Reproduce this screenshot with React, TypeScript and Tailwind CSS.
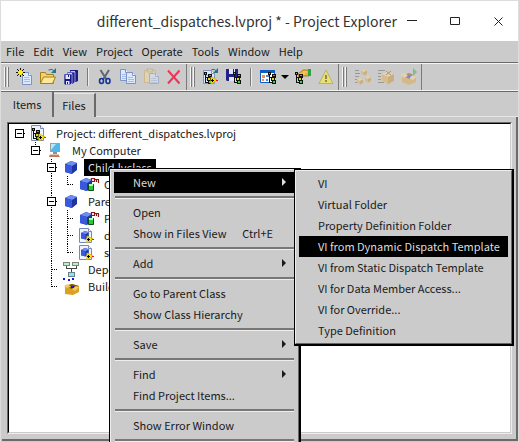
import type { ReactNode } from "react";

/* ---------- shared drawing parts ---------- */

function Icon({ children, faded }: { children: ReactNode; faded?: boolean }) {
  return (
    <svg
      viewBox="0 0 18 18"
      className={faded ? "h-[18px] w-[18px] opacity-50" : "h-[18px] w-[18px]"}
      aria-hidden="true"
    >
      {children}
    </svg>
  );
}

function Sheet({ x, y, w = 9, h = 12 }: { x: number; y: number; w?: number; h?: number }) {
  return (
    <g>
      <path
        d={`M${x + 0.5} ${y + 0.5}h${w - 3}l3 3v${h - 3}h${-w}z`}
        fill="#dce8fb"
        stroke="#7d93c4"
      />
      <path d={`M${x + w - 2.5} ${y + 0.5}v3h3`} fill="#ffffff" stroke="#7d93c4" />
      <path d={`M${x + 2} ${y + 5.5}h${w - 4}M${x + 2} ${y + 7.5}h${w - 3}M${x + 2} ${y + 9.5}h${w - 3}`} stroke="#a4bdec" />
    </g>
  );
}

function Branch({ x, y }: { x: number; y: number }) {
  return (
    <g shapeRendering="crispEdges">
      <path d={`M${x} ${y}h3v3h-3zM${x + 1} ${y + 3}h1v8h-1zM${x + 2} ${y + 5}h3v1h-3zM${x + 2} ${y + 10}h2v1h-2z`} fill="#111" />
      <path d={`M${x + 4} ${y + 2}h4v4h-4zM${x + 3} ${y + 5}h4v4h-4zM${x + 4} ${y + 8}h4v4h-4z`} fill="#111" />
      <path d={`M${x + 1} ${y + 1}h1v1h-1z`} fill="#25d6e6" />
      <path d={`M${x + 5} ${y + 3}h2v1h-2z`} fill="#888" />
      <path d={`M${x + 4} ${y + 6}h2v2h-2z`} fill="#e6d71c" />
      <path d={`M${x + 5} ${y + 9}h2v2h-2z`} fill="#2ce234" />
    </g>
  );
}

function Cube({ x = 0, y = 0 }: { x?: number; y?: number }) {
  return (
    <g>
      <path d={`M${x} ${y + 3}l6-3 6 2v7l-5 4-7-2z`} fill="#1d35a4" />
      <path d={`M${x} ${y + 3}l6-3 6 2-5 3z`} fill="#6d8df0" />
      <path d={`M${x} ${y + 3}l7 2v8l-7-2z`} fill="#3a58dc" />
    </g>
  );
}

function YellowNode({ x, y }: { x: number; y: number }) {
  return (
    <g>
      <path d={`M${x} ${y}l6 3-6 4z`} fill="#ffef0a" stroke="#d8b800" strokeWidth="1" />
      <path d={`M${x} ${y + 3.5}h3M${x + 1.5} ${y + 2}v3`} stroke="#000" />
      <path d={`M${x + 5} ${y + 3}h2v1h-2z`} fill="#f01010" />
    </g>
  );
}

function Box({ x, y, s }: { x: number; y: number; s: number }) {
  return (
    <g>
      <path d={`M${x} ${y + s * 0.25}l${s * 0.5} ${-s * 0.25}l${s * 0.5} ${s * 0.25}v${s * 0.55}l${-s * 0.5} ${s * 0.3}l${-s * 0.5} ${-s * 0.3}z`} fill="#e8ac50" />
      <path d={`M${x} ${y + s * 0.25}l${s * 0.5} ${-s * 0.25}l${s * 0.5} ${s * 0.25}l${-s * 0.5} ${s * 0.25}z`} fill="#f9dc9c" />
      <path d={`M${x + s * 0.5} ${y + s * 0.5}l${s * 0.5} ${-s * 0.25}v${s * 0.55}l${-s * 0.5} ${s * 0.3}z`} fill="#c89238" />
    </g>
  );
}

/* ---------- toolbar ---------- */

const newIcon = (
  <Icon>
    <Sheet x={6} y={4} />
    <g shapeRendering="crispEdges">
      <path d="M4 0h1v9h-1zM0 4h9v1h-9z" fill="#111" />
      <path d="M1 1h1v1h-1zM2 2h1v1h-1zM7 1h1v1h-1zM6 2h1v1h-1zM1 7h1v1h-1zM2 6h1v1h-1zM6 6h1v1h-1zM7 7h1v1h-1z" fill="#111" />
      <path d="M3 3h3v3h-3zM4 2h1v5h-1zM2 4h5v1h-5z" fill="#ffef20" />
    </g>
  </Icon>
);

const openIcon = (
  <Icon>
    <path d="M1.5 15.5v-11h5l1 2h7v9z" fill="#f6d364" stroke="#a8801a" />
    <path d="M1.5 15.5l3-6.500h12l-3 6.500z" fill="#fce898" stroke="#a8801a" />
    <path d="M9.500 2q4-2 6 1.500" fill="none" stroke="#25758b" />
    <path d="M17 0v5h-5z" fill="#25758b" />
  </Icon>
);

const saveAllIcon = (
  <Icon>
    <path d="M8 2h8v11l-2 1h-6z" fill="#1a1a8a" />
    <path d="M9 3h4v3h-4z" fill="#c5c9ea" />
    <path d="M5 4h8v10l-2 2h-6z" fill="#25259a" stroke="#c4c8ea" strokeWidth=".7" />
    <path d="M6 5h4v3h-4z" fill="#d7daf2" />
    <path d="M2 6h8v9l-2 2h-5l-1-1z" fill="#17178a" stroke="#c4c8ea" strokeWidth=".7" />
    <path d="M3.500 7h4.500v4h-4.500zM4 13h3.500v3.500h-3.500z" fill="#e6e8f6" />
    <path d="M6 7h1v2h-1zM5 14h1v2h-1z" fill="#17178a" />
  </Icon>
);

const cutIcon = (
  <Icon>
    <path d="M4.500 2l6 9.500M13 2l-6 9.500" stroke="#5d6671" strokeWidth="2" />
    <ellipse cx="5.500" cy="13" rx="2" ry="2.500" fill="none" stroke="#12349c" strokeWidth="1.600" />
    <ellipse cx="12" cy="13" rx="2" ry="2.500" fill="none" stroke="#12349c" strokeWidth="1.600" />
  </Icon>
);

const copyIcon = (
  <Icon>
    <Sheet x={1} y={1} w={8} h={11} />
    <Sheet x={7} y={4} w={9} h={11} />
  </Icon>
);

const pasteIcon = (
  <Icon faded>
    <path d="M2.500 2.500h11v12h-11z" fill="#f3dc98" stroke="#c8a860" />
    <path d="M5 1h6v3h-6z" fill="#e0d0a0" stroke="#a89560" strokeWidth=".7" />
    <Sheet x={7} y={5} w={9} h={10} />
  </Icon>
);

const deleteIcon = (
  <Icon>
    <path d="M3 2.500l11.500 13M14.500 2.500l-11.500 13" stroke="#ee3457" strokeWidth="2" />
  </Icon>
);

const projectIcon = (
  <Icon>
    <Sheet x={1} y={2} w={11} h={13} />
    <path d="M9.500 1.500q3-1 5 1.500" fill="none" stroke="#25758b" />
    <path d="M16 0v5h-5z" fill="#25758b" />
    <Branch x={2} y={4} />
    <YellowNode x={9} y={9} />
  </Icon>
);

const saveProjectIcon = (
  <Icon>
    <path d="M1 1h12v12h-11l-1-1z" fill="#22228a" />
    <path d="M4 1h6v5h-6zM4 9h7v4h-7z" fill="#e2e4f4" />
    <path d="M8 1h1v4h-1z" fill="#22228a" />
    <Branch x={8} y={4} />
  </Icon>
);

const windowIcon = (
  <Icon>
    <path d="M1.500 2.500h14v12h-14z" fill="#ffffff" stroke="#0d5cc4" />
    <path d="M1 2h15v3h-15z" fill="#0d5cc4" />
    <path d="M3 7h3v3h-3zM3 11h2v2h-2z" fill="#f09058" />
    <path d="M7 7h3v2h-3zM7 11h2v2h-2z" fill="#4d8be0" />
    <Branch x={9} y={4} />
  </Icon>
);

const handIcon = (
  <Icon>
    <path d="M4 6l5-4h6v6h-5l-5 1z" fill="#efad31" stroke="#9c6510" strokeWidth=".7" />
    <path d="M5 6h6M9 4h4" stroke="#fbd978" />
    <path d="M14 1h3v7h-3z" fill="#2ca446" />
    <Branch x={1} y={4} />
  </Icon>
);

const warnIcon = (
  <Icon>
    <path d="M9 2l7 13.500h-14z" fill="#eae070" stroke="#b5b080" strokeLinejoin="round" />
    <path d="M8 7h2v4h-2zM8 12h2v2h-2z" fill="#8e8a50" />
  </Icon>
);

const boxesIcon = (
  <Icon faded>
    <path d="M1 2.500h4M1 5.500h5M1 8.500h4M1 11.500h2M1 14.500h2" stroke="#666" />
    <Box x={7} y={1} s={6} />
    <Box x={3} y={10} s={6} />
    <Box x={11} y={8} s={6} />
  </Icon>
);

const boxIcon = (
  <Icon faded>
    <path d="M1 2.500h7M1 5.500h3M1 8.500h3M1 11.500h3M1 14.500h6" stroke="#666" />
    <Box x={5} y={3} s={12} />
    <path d="M9 3l5 4M14 3l-5 4" stroke="#8e6420" />
  </Icon>
);

const openBoxIcon = (
  <Icon faded>
    <path d="M2 8l7-3 7 3v6l-7 3-7-3z" fill="#e0a848" />
    <path d="M2 8l7-3 7 3-7 3z" fill="#8d5f15" />
    <path d="M0 6l5-1 3 3-4 2zM9 10l4-3 4 1-4 4z" fill="#f6dc9c" />
    <path d="M7 8h4v1h-4zM8 7h2v3h-2z" fill="#3344ff" />
    <path d="M13 0l4 4-4 4z" fill="#46a84c" />
  </Icon>
);

type Tool = { label: string; icon: ReactNode } | "divider" | "arrow";

const toolGroups: Tool[][] = [
  [
    { label: "New", icon: newIcon },
    { label: "Open", icon: openIcon },
    { label: "Save All", icon: saveAllIcon },
    "divider",
    { label: "Cut", icon: cutIcon },
    { label: "Copy", icon: copyIcon },
    { label: "Paste", icon: pasteIcon },
    { label: "Delete", icon: deleteIcon },
  ],
  [
    { label: "Project", icon: projectIcon },
    { label: "Save Project", icon: saveProjectIcon },
    "divider",
    { label: "View Options", icon: windowIcon },
    "arrow",
    { label: "Properties", icon: handIcon },
    { label: "Resolve Conflicts", icon: warnIcon },
  ],
  [
    { label: "Build All", icon: boxesIcon },
    { label: "Build", icon: boxIcon },
    { label: "Deploy", icon: openBoxIcon },
  ],
];

function ToolItem({ tool }: { tool: Tool }) {
  if (tool === "divider") {
    return (
      <div className="flex w-[11px] justify-center">
        <div className="h-[18px] w-[2px] border-r border-[#eeeeee] bg-[#7a7a7a]" />
      </div>
    );
  }
  if (tool === "arrow") {
    return (
      <button type="button" aria-label="View menu" className="flex h-[22px] w-3 items-center justify-center">
        <svg viewBox="0 0 8 4" className="h-1 w-2" aria-hidden="true">
          <path d="M0 0h8l-4 4z" fill="#000" />
        </svg>
      </button>
    );
  }
  return (
    <button type="button" aria-label={tool.label} className="flex h-[22px] w-[23px] items-center justify-center">
      {tool.icon}
    </button>
  );
}

/* ---------- project tree ---------- */

type Cell = "gap" | "root" | "leafToggle" | "toggle" | "line" | "tee" | "end";

function TreeCell({ kind }: { kind: Cell }) {
  const isToggle = kind === "root" || kind === "leafToggle" || kind === "toggle";
  const up = kind !== "gap" && kind !== "root";
  const down = kind === "toggle" || kind === "line" || kind === "tee";
  const right = kind !== "gap" && kind !== "line";
  return (
    <svg viewBox="0 0 16 17" className="h-[17px] w-4 shrink-0" shapeRendering="crispEdges" aria-hidden="true">
      <g stroke="#000" fill="none" strokeDasharray="1 1">
        {up && <path d="M7.500 0v9" />}
        {down && <path d="M7.500 8v9" />}
        {right && <path d="M8 8.500h6" />}
      </g>
      {isToggle && (
        <g>
          <path d="M3.500 4.500h8v8h-8z" fill="#fff" stroke="#000" />
          <path d="M5 8.500h5" stroke="#000" />
        </g>
      )}
    </svg>
  );
}

const cubeArt = <Cube x={5} y={2} />;

const dataArt = (
  <g>
    <Cube x={4} y={2} />
    <path d="M12.500 8.500h5v6h-5z" fill="#25c93a" stroke="#0c4c16" strokeWidth="1" />
    <path d="M13 8h4v2h-4z" fill="#b5f5ba" />
    <path d="M15.500 2.500h3v3h-3zM18 3.500h5M20.500 4v2M22.500 4v3" fill="none" stroke="#8c1414" strokeWidth="1.200" />
  </g>
);

const methodArt = (
  <g>
    <path d="M3.500 1.500h9l3 3v11h-12z" fill="#eef3ff" stroke="#7888b8" />
    <path d="M12.500 1.500v3h3" fill="#fff" stroke="#7888b8" />
    <g transform="translate(5 4) scale(.65)">
      <Cube />
    </g>
    <YellowNode x={11} y={9} />
  </g>
);

const projectArt = (
  <g>
    <path d="M3.500 .500h9l3 3v12h-12z" fill="#eef2ff" stroke="#7888b8" />
    <path d="M12.500 .500v3h3" fill="#fff" stroke="#7888b8" />
    <Branch x={4} y={3} />
    <YellowNode x={11} y={9} />
  </g>
);

const computerArt = (
  <g>
    <path d="M6 1h10v9h-10z" fill="#9aa0a8" />
    <path d="M7 2h8v7h-8z" fill="#4fb8e4" />
    <path d="M7 2h5l-5 6z" fill="#b4e8fa" />
    <path d="M9 10h4v2h-4z" fill="#8a8f98" />
    <path d="M6 12h8l2 3h-11z" fill="#c07a5c" />
    <path d="M6 12h8v1h-8z" fill="#e3c8bc" />
  </g>
);

const dependencyArt = (
  <g shapeRendering="crispEdges">
    <path d="M6.500 5v3M16.500 5v3M6 7.500h11M11.500 8v3" stroke="#444" fill="none" />
    <path d="M3.500 1.500h6v3h-6zM12.500 1.500h6v3h-6z" fill="#b8f4c0" stroke="#7c867e" />
    <path d="M8.500 11.500h6v4h-6z" fill="#7eeaf6" stroke="#6a8088" />
  </g>
);

const buildArt = (
  <g>
    <path d="M5 8l7-2 7 2v6l-6 3-8-1z" fill="#d9a21f" />
    <path d="M5 8l7-2 7 2-7 3z" fill="#7c5208" />
    <path d="M4 8l4-2 3 3-4 1zM12 11l4-3 3 1-4 4z" fill="#f3ca68" />
    <path d="M3 0h2v2h-2zM8 1h2v2h-2zM12 0h2v2h-2zM11 8h3v2h-3z" fill="#1414d8" />
  </g>
);

type Node = { label: string; cells: Cell[]; art: ReactNode; selected?: boolean };

const treeRows: Node[] = [
  { label: "Project: different_dispatches.lvproj", cells: ["root"], art: projectArt },
  { label: "My Computer", cells: ["gap", "leafToggle"], art: computerArt },
  { label: "Child.lvclass", cells: ["gap", "gap", "toggle"], art: cubeArt, selected: true },
  { label: "Child.ctl", cells: ["gap", "gap", "line", "end"], art: dataArt },
  { label: "Parent.lvclass", cells: ["gap", "gap", "toggle"], art: cubeArt },
  { label: "Parent.ctl", cells: ["gap", "gap", "line", "tee"], art: dataArt },
  { label: "dynamic.vi", cells: ["gap", "gap", "line", "tee"], art: methodArt },
  { label: "static.vi", cells: ["gap", "gap", "line", "end"], art: methodArt },
  { label: "Dependencies", cells: ["gap", "gap", "tee"], art: dependencyArt },
  { label: "Build Specifications", cells: ["gap", "gap", "end"], art: buildArt },
];

function TreeRow({ node }: { node: Node }) {
  return (
    <li role="treeitem" aria-selected={node.selected ?? false} className="flex h-[17px] items-center">
      {node.cells.map((kind, i) => (
        <TreeCell key={i} kind={kind} />
      ))}
      <svg viewBox="0 0 24 17" className="h-[17px] w-6 shrink-0" aria-hidden="true">
        {node.art}
      </svg>
      <span className={node.selected ? "bg-black px-1 leading-[17px] text-[#dddddd]" : "px-1 leading-[17px]"}>
        {node.label}
      </span>
    </li>
  );
}

/* ---------- menus ---------- */

type Entry = { label: string; shortcut?: string; submenu?: boolean; active?: boolean } | null;

const contextEntries: Entry[] = [
  { label: "New", submenu: true, active: true },
  null,
  { label: "Open" },
  { label: "Show in Files View", shortcut: "Ctrl+E" },
  null,
  { label: "Add", submenu: true },
  null,
  { label: "Go to Parent Class" },
  { label: "Show Class Hierarchy" },
  null,
  { label: "Save", submenu: true },
  null,
  { label: "Find", submenu: true },
  { label: "Find Project Items..." },
  null,
  { label: "Show Error Window" },
  null,
];

const newEntries: Entry[] = [
  { label: "VI" },
  { label: "Virtual Folder" },
  { label: "Property Definition Folder" },
  { label: "VI from Dynamic Dispatch Template", active: true },
  { label: "VI from Static Dispatch Template" },
  { label: "VI for Data Member Access..." },
  { label: "VI for Override..." },
  { label: "Type Definition" },
];

function Menu({ label, entries, place }: { label: string; entries: Entry[]; place: string }) {
  return (
    <div role="menu" aria-label={label} className={`absolute border-t border-r-2 border-b-2 border-l border-black ${place}`}>
      <div className="border border-t-[#eeeeee] border-r-[#666666] border-b-[#666666] border-l-[#eeeeee] bg-[#cbcbcb] px-[3px] py-[2px]">
        {entries.map((entry, i) =>
          entry === null ? (
            <hr key={i} className="mx-px my-[3px] h-[3px] border-t-2 border-b border-t-[#777777] border-b-[#eeeeee]" />
          ) : (
            <button
              key={i}
              type="button"
              role="menuitem"
              className={
                entry.active
                  ? "flex h-[21px] w-full items-center bg-black pr-[9px] pb-[2px] pl-[19px] text-left text-[#dddddd]"
                  : "flex h-[21px] w-full items-center pr-[9px] pb-[2px] pl-[19px] text-left"
              }
            >
              <span className="flex-1 whitespace-nowrap">{entry.label}</span>
              {entry.shortcut && <span className="pr-[13px]">{entry.shortcut}</span>}
              {entry.submenu && (
                <svg viewBox="0 0 4 8" className="h-2 w-1" aria-hidden="true">
                  <path d="M0 0l4 4-4 4z" fill="currentColor" />
                </svg>
              )}
            </button>
          ),
        )}
      </div>
    </div>
  );
}

/* ---------- window ---------- */

const menuNames = ["File", "Edit", "View", "Project", "Operate", "Tools", "Window", "Help"];

export default function App() {
  return (
    <div className="relative flex h-screen flex-col overflow-hidden border-x border-t border-[#dddddd] bg-[#cbcbcb] font-['Noto_Sans_CJK_SC',sans-serif] text-[11px] leading-4 text-[#1a1a1a]">
      <header className="flex h-10 shrink-0 items-center justify-end bg-white">
        <h1 className="text-sm font-normal whitespace-nowrap text-[#333333]">
          different_dispatches.lvproj * - Project Explorer
        </h1>
        <button type="button" aria-label="Minimize" className="ml-[5px] flex h-10 w-[21px] items-center justify-center">
          <svg viewBox="0 0 11 11" className="size-[11px]" aria-hidden="true">
            <path d="M0 4.500h10" stroke="#222" />
          </svg>
        </button>
        <button type="button" aria-label="Maximize" className="ml-[22px] flex h-10 w-[21px] items-center justify-center">
          <svg viewBox="0 0 11 11" className="size-[11px]" aria-hidden="true">
            <path d="M.500 1.500h9v7h-9z" fill="none" stroke="#222" />
          </svg>
        </button>
        <button type="button" aria-label="Close" className="mr-[9px] ml-[22px] flex h-10 w-[21px] items-center justify-center">
          <svg viewBox="0 0 11 11" className="size-[11px]" aria-hidden="true">
            <path d="M1.500 1.500l8 8M9.500 1.500l-8 8" stroke="#222" />
          </svg>
        </button>
      </header>

      <nav aria-label="Main menu" className="flex h-[21px] shrink-0 items-center gap-px pl-px">
        {menuNames.map((name) => (
          <button key={name} type="button" className="px-1 pb-[2px]">
            {name}
          </button>
        ))}
      </nav>

      <div role="toolbar" aria-label="Project tools" className="flex h-[30px] shrink-0 border-y border-[#6a6a6a]">
        <div className="flex w-full border-y border-[#f4f4f4]">
          {toolGroups.map((group, i) => (
            <div key={i} className="flex items-center border-r border-[#7a7a7a] pr-px">
              <div className="mr-1 ml-[3px] flex h-[20px] w-[5px] justify-between">
                <div className="w-[2px] border-r border-[#7a7a7a] bg-[#f4f4f4]" />
                <div className="w-[2px] border-r border-[#7a7a7a] bg-[#f4f4f4]" />
              </div>
              {group.map((tool, j) => (
                <ToolItem key={j} tool={tool} />
              ))}
            </div>
          ))}
        </div>
      </div>

      <main className="flex min-h-0 flex-1 flex-col pb-px pl-px">
        <div role="tablist" className="flex h-[25px] shrink-0 items-end">
          <button type="button" role="tab" aria-selected="true" className="h-[25px] w-[52px] border-r-2 border-[#6a6a6a] pb-[2px]">
            Items
          </button>
          <button type="button" role="tab" aria-selected="false" className="h-6 w-[42px] border-t border-r-2 border-t-[#e6e6e6] border-r-[#6a6a6a] pb-[2px]">
            Files
          </button>
          <div className="flex-1 self-end border-b border-[#e6e6e6]" />
        </div>
        <div className="flex min-h-0 flex-1 border-r-2 border-b-2 border-[#6a6a6a] pt-[5px] pr-1 pb-[5px] pl-[5px]">
          <div className="flex min-w-0 flex-1 border border-t-[#6a6a6a] border-r-[#eeeeee] border-b-[#eeeeee] border-l-[#6a6a6a]">
            <ul
              role="tree"
              aria-label="Project items"
              className="flex-1 overflow-hidden border border-t-black border-r-[#cbcbcb] border-b-[#cbcbcb] border-l-black bg-white pt-px pl-[3px]"
            >
              {treeRows.map((node) => (
                <TreeRow key={node.label} node={node} />
              ))}
            </ul>
          </div>
        </div>
      </main>

      <Menu label="Item menu" entries={contextEntries} place="left-[108px] top-[167px] w-[192px]" />
      <Menu label="New item" entries={newEntries} place="left-[293px] top-[168px] w-[220px]" />
    </div>
  );
}
